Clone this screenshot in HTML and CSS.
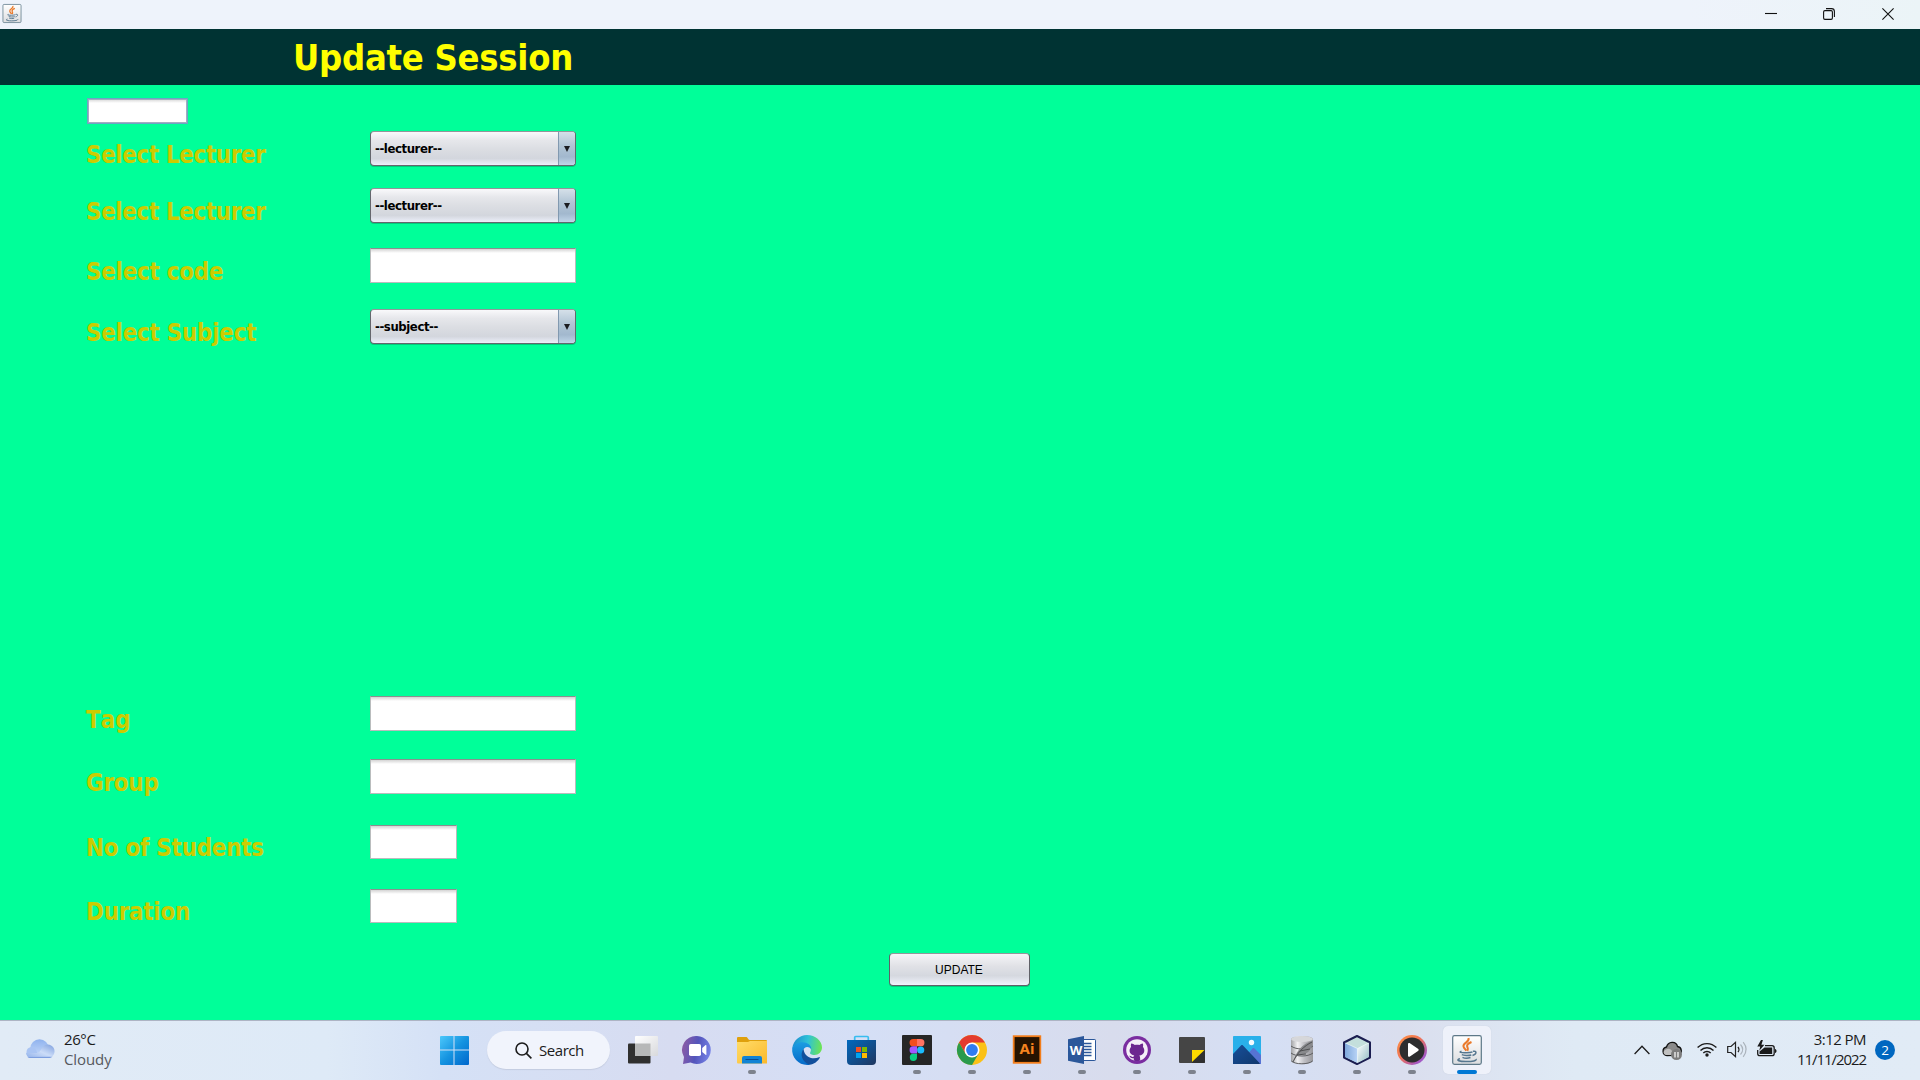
FILE: index.html
```html
<!DOCTYPE html>
<html lang="en">
<head>
<meta charset="utf-8">
<title>Update Session</title>
<link rel="stylesheet" href="styles.css">
</head>
<body>
<div class="titlebar">
  <svg class="java-small" viewBox="0 0 30 30"><use href="#java"/></svg>
  <div class="window-controls">
    <svg viewBox="0 0 12 12"><path d="M0 5.5h12"/></svg>
    <svg viewBox="0 0 12 12"><rect x=".6" y="2.6" width="8.8" height="8.8" rx="1.3"/><path d="M3 .6h5.5a2.9 2.9 0 0 1 2.9 2.9V9"/></svg>
    <svg viewBox="0 0 12 12"><path d="M.4.4l11.2 11.2M11.6.4L.4 11.6"/></svg>
  </div>
</div>
<header class="heading"><h1>Update Session</h1></header>
<main class="form">
  <div class="field small focus"></div>
  <div class="row r1"><label>Select Lecturer</label><div class="combo"><span>--lecturer--</span><i></i></div></div>
  <div class="row r2"><label>Select Lecturer</label><div class="combo"><span>--lecturer--</span><i></i></div></div>
  <div class="row r3"><label>Select code</label><div class="field"></div></div>
  <div class="row r4"><label>Select Subject</label><div class="combo"><span>--subject--</span><i></i></div></div>
  <div class="row r5"><label>Tag</label><div class="field"></div></div>
  <div class="row r6"><label>Group</label><div class="field"></div></div>
  <div class="row r7 short"><label>No of Students</label><div class="field"></div></div>
  <div class="row r8 short"><label>Duration</label><div class="field"></div></div>
  <button class="update">UPDATE</button>
</main>
<footer class="taskbar">
  <div class="weather">
    <svg viewBox="0 0 30 20">
      <defs><linearGradient id="cl1" x1="0" y1="0" x2="0" y2="1"><stop offset="0" stop-color="#8fb2ee"/><stop offset="1" stop-color="#c9dcfa"/></linearGradient>
      <linearGradient id="cl2" x1="1" y1="0" x2="0" y2="1"><stop offset="0" stop-color="#7fa0de"/><stop offset=".5" stop-color="#cbdcf8"/><stop offset="1" stop-color="#8fb0ea"/></linearGradient></defs>
      <circle cx="14.5" cy="9.5" r="9.3" fill="url(#cl1)"/>
      <path d="M6 8a6 6 0 0 1 5.5 4L14 19H6A5.6 5.6 0 0 1 6 8z" fill="#a9c4f3"/>
      <path d="M6 19h17a6.7 6.7 0 1 0-6-10c-1.500 2-2 4.500-5 5H1c.5 3 2.500 5 5 5z" fill="url(#cl2)"/>
      <path d="M2.500 18c1 .8 2 1 3.500 1h17c2 0 3.500-.5 4.500-1.300z" fill="#7d9fe0"/>
    </svg>
    <div class="lines"><span>26°C</span><span class="dim">Cloudy</span></div>
  </div>
  <div class="slot start"><svg viewBox="0 0 30 30">
    <defs><linearGradient id="win" x1="0" y1="0" x2="1" y2="1"><stop offset="0" stop-color="#4cc8fb"/><stop offset=".5" stop-color="#1593e0"/><stop offset="1" stop-color="#0067cc"/></linearGradient></defs>
    <path fill="url(#win)" d="M2 1h12.500v13.500H1V2a1 1 0 0 1 1-1zM15.500 1H29a1 1 0 0 1 1 1v12.500H15.500zM1 15.500h13.500V30H2a1 1 0 0 1-1-1zM15.500 15.500H30V29a1 1 0 0 1-1 1H15.500z"/></svg></div>
  <div class="search"><svg viewBox="0 0 17 17"><circle cx="7" cy="7" r="6"/><path d="M11.400 11.400l5 5"/></svg><span>Search</span></div>

  <div class="slot"><svg viewBox="0 0 30 30">
    <defs><linearGradient id="tv" x1="0" y1="0" x2="1" y2="1"><stop offset="0" stop-color="#fff"/><stop offset="1" stop-color="#d8d9dc"/></linearGradient></defs>
    <rect x="1" y="8.500" width="22.500" height="20" rx="1" fill="#30302f"/><rect x="8" y="1" width="23" height="20" rx="1" fill="url(#tv)"/><path d="M8 8.500h15.500V21H8z" fill="#b7b8b8"/></svg></div>
  <div class="slot"><svg viewBox="0 0 30 30">
    <defs><linearGradient id="chat" x1="0" y1=".4" x2="1" y2=".6"><stop offset="0" stop-color="#8a5ba6"/><stop offset=".5" stop-color="#5355bb"/><stop offset="1" stop-color="#7784e8"/></linearGradient></defs>
    <path d="M15 1a14 14 0 1 1-6.500 26.500L1 29l1-7A14 14 0 0 1 15 1z" fill="url(#chat)"/><rect x="7" y="9" width="12" height="12" rx="1.800" fill="#fff"/><path d="M20.200 13l3.400-3c.4-.3.800 0 .8.400v9c0 .5-.5.800-.8.400l-3.400-2.800z" fill="#fff"/></svg></div>
  <div class="slot run"><svg viewBox="0 0 30 30">
    <defs><linearGradient id="fold" x1="0" y1="0" x2="1" y2="1"><stop offset="0" stop-color="#ffdc69"/><stop offset="1" stop-color="#fbb92b"/></linearGradient></defs>
    <path d="M0 9V3a1 1 0 0 1 1-1h8.500c1 0 1.700 3 3 3H29a1 1 0 0 1 1 1v4z" fill="#dfa00c"/><path d="M0 7h11l2-1h17v22.500H1a1 1 0 0 1-1-1z" fill="url(#fold)"/><path d="M5 28.500V23a2 2 0 0 1 2-2h16a2 2 0 0 1 2 2v5.500z" fill="#1183d4"/><rect x="8.500" y="24" width="13" height="1" fill="#0a4d91"/></svg></div>
  <div class="slot"><svg viewBox="0 0 30 30">
    <defs><linearGradient id="ed1" x1="0" y1=".5" x2="1" y2=".6"><stop offset="0" stop-color="#1c8dd0"/><stop offset=".5" stop-color="#2fc2d7"/><stop offset="1" stop-color="#6ee550"/></linearGradient><linearGradient id="ed2" x1="0" y1="0" x2="0" y2="1"><stop offset="0" stop-color="#1b9de2"/><stop offset="1" stop-color="#0669c8"/></linearGradient></defs>
    <path d="M.3 13C1.500 5.500 7.500 0 15 0c8.500 0 15 6 15 12.500 0 4.500-3.500 7.500-7.500 7.500-3 0-5-1-4.300-2.500 1.700-3 .3-6.500-4.200-8C8 8 3 9.500.3 13z" fill="url(#ed1)"/>
    <path d="M.2 13C2.500 9 6 7.300 10.500 7.300c5 0 9 3.200 8.800 7-3-4-8-2.300-8.500 2.500C10.300 22 13 27 18 29.700 8 31.500-.8 23.500.2 13z" fill="url(#ed2)"/>
    <path d="M11.500 14C7.500 19 10 27 17.500 29.800c4.500-.5 8.500-3.500 10.300-7 .3-.6-.2-.9-.8-.6-6 2.800-14.500.5-15.500-8.200z" fill="#124f9c"/></svg></div>
  <div class="slot"><svg viewBox="0 0 30 30">
    <defs><linearGradient id="st" x1="0" y1="0" x2="1" y2="1"><stop offset="0" stop-color="#0069bf"/><stop offset="1" stop-color="#20365f"/></linearGradient></defs>
    <path d="M7.700 6V2.500a1 1 0 0 1 1-1h11.600a1 1 0 0 1 1 1V6" fill="none" stroke="#38bdf0" stroke-width="1.700"/><path d="M0 5h29v21a4 4 0 0 1-4 4H4a4 4 0 0 1-4-4z" fill="url(#st)"/><path d="M9 12h5v5H9z" fill="#f25022"/><path d="M15 12h5v5h-5z" fill="#7fba00"/><path d="M9 18h5v5H9z" fill="#00a4ef"/><path d="M15 18h5v5h-5z" fill="#ffb900"/></svg></div>
  <div class="slot run"><svg viewBox="0 0 30 30"><rect width="30" height="30" rx="1" fill="#262626"/><path d="M15 4h-3.800a3.600 3.600 0 0 0 0 7.300H15z" fill="#f24e1e"/><path d="M15 4h3.800a3.600 3.600 0 0 1 0 7.300H15z" fill="#ff7262"/><path d="M15 11.300h-3.800a3.600 3.600 0 0 0 0 7.300H15z" fill="#a259ff"/><circle cx="18.700" cy="15" r="3.600" fill="#1abcfe"/><path d="M15 18.700h-3.800a3.600 3.600 0 1 0 3.800 3.700z" fill="#0acf83"/></svg></div>
  <div class="slot run"><svg viewBox="0 0 30 30"><circle cx="15" cy="15" r="15" fill="#fbc116"/><path d="M2 7.500A15 15 0 0 1 28 7.500H15L8.500 18.750z" fill="#e33b2e"/><path d="M2 7.500a15 15 0 0 0 13 22.500l6.500-11.200H8.500z" fill="#2a9a4c"/><circle cx="15" cy="15" r="7.500" fill="#fff"/><circle cx="15" cy="15" r="5.900" fill="#2f7cf0"/></svg></div>
  <div class="slot run"><svg viewBox="0 0 30 30"><rect x="1.700" y="1.200" width="26.600" height="26.600" fill="#261300" stroke="#f27d1a" stroke-width="1.800"/><text class="ai-text" x="15" y="18.500" text-anchor="middle">Ai</text></svg></div>
  <div class="slot run"><svg viewBox="0 0 30 30"><rect x="14" y="4.500" width="14.500" height="21" rx=".7" fill="#fff" stroke="#2b579a"/><path d="M16 8.500h8.500M16 11.500h8.500M16 14.500h8.500M16 17.500h8.500M16 20.500h8.500" stroke="#2b579a" stroke-width="1.300"/><path d="M1 4.200L17 1v28L1 25.800z" fill="#2b579a"/><text class="word-text" x="9" y="19.500" text-anchor="middle">W</text></svg></div>
  <div class="slot run"><svg viewBox="0 0 30 30"><circle cx="15" cy="15" r="14" fill="#7a2da0"/><circle cx="15" cy="15" r="10.800" fill="#f5eff8"/><path d="M9.300 8.600c1-.2 2.600.7 3.500 1.300 1.500-.3 3.200-.3 4.600 0 1-.6 2.500-1.500 3.400-1.300.5 1.200.4 2.300.1 3.100 3 3.900 1 8.300-3.600 8.800.8.900.9 2 .9 5-2 .7-4.300.7-6.400 0v-2.300c-3 .6-3.400-1-4.600-2.400 1.900-.3 2.300 1.700 4.400 1 .1-.7.400-1.100.7-1.400-4.700-.5-6.200-5-3.200-8.600-.3-.9-.3-2.200.200-3.200z" fill="#6c278f"/></svg></div>
  <div class="slot run"><svg viewBox="0 0 30 30"><path d="M3 2h24a1 1 0 0 1 1 1v24a1 1 0 0 1-1 1H3a1 1 0 0 1-1-1V3a1 1 0 0 1 1-1z" fill="#454545"/><path d="M15 28V15h13v12a1 1 0 0 1-1 1z" fill="#303030"/><path d="M15 15h12.500L15 27z" fill="#fddb00"/></svg></div>
  <div class="slot run"><svg viewBox="0 0 30 30">
    <defs><linearGradient id="ph" x1="0" y1="0" x2="1" y2="1"><stop offset="0" stop-color="#174f99"/><stop offset="1" stop-color="#10386d"/></linearGradient></defs>
    <rect x="1" y="1" width="28" height="28" rx=".8" fill="#29b0ea"/><path d="M13 22l7.500-8.500c.6-.6 1.400-.6 2 0L29 20v9H17z" fill="#5673d4"/><path d="M1 19l8-8.500c.6-.6 1.400-.6 2 0L28 28.500l-1 .5H1z" fill="url(#ph)"/><circle cx="19.500" cy="7.500" r="2.700" fill="#f3faff"/></svg></div>
  <div class="slot run"><svg viewBox="0 0 30 30">
    <defs><linearGradient id="db"><stop offset="0" stop-color="#a1a2a5"/><stop offset=".3" stop-color="#f1f1f3"/><stop offset=".6" stop-color="#bfbfc4"/><stop offset="1" stop-color="#97979b"/></linearGradient></defs>
    <path d="M4 4c1-4 21-4 22 0v21.500c-2 5-20 5-22 0z" fill="url(#db)"/><ellipse cx="15" cy="4" rx="11" ry="3" fill="#d6d7da"/><path d="M4 11c5 4 17 4 22 0M4 18c5 4 17 4 22 0M4.300 26c4 3.700 17 3.700 21.400 0" fill="none" stroke="#5b5c5f" stroke-width="1"/><path d="M6 27C9 17 15 8 26 6c-1 6-3 11-8 13-3 1-6 1-8 2z" fill="#88898c"/><path d="M6 27C10 18 17 11 25 7M13 16l10-2M10 20l9-1" fill="none" stroke="#48494c" stroke-width=".9"/></svg></div>
  <div class="slot run"><svg viewBox="0 0 30 30">
    <defs><linearGradient id="nb1"><stop offset="0" stop-color="#7fa8dc"/><stop offset="1" stop-color="#b9d4f6"/></linearGradient><linearGradient id="nb2" x1="0" y1="0" x2="1" y2="1"><stop offset="0" stop-color="#fff"/><stop offset="1" stop-color="#93bcc4"/></linearGradient></defs>
    <path d="M15 1l13 6.500v15L15 29 2 22.500v-15z" fill="#c4dfdc" stroke="#1b1d50" stroke-width="2" stroke-linejoin="round"/><path d="M3 8l12.500 5.500V28L3 22z" fill="url(#nb1)"/><path d="M15.500 13.500L27 8v14l-11.500 6z" fill="url(#nb2)"/><path d="M3.500 8l12 5.500L26.500 8M15.500 13.500v14" stroke="#f5fcfd" fill="none" stroke-width=".6"/></svg></div>
  <div class="slot run"><svg viewBox="0 0 30 30">
    <defs><linearGradient id="mp" x1="0" y1="0" x2="1" y2="1"><stop offset="0" stop-color="#ff9440"/><stop offset=".45" stop-color="#ef7257"/><stop offset=".8" stop-color="#a658c0"/><stop offset="1" stop-color="#9a66df"/></linearGradient></defs>
    <circle cx="15" cy="15" r="15" fill="url(#mp)"/><circle cx="15" cy="15" r="12.500" fill="#2d2d2e"/><path d="M11 9.300c0-1.200 1-1.600 1.900-1L21 13.800c.9.600.9 1.600 0 2.200l-8.100 5.500c-.9.600-1.900.2-1.900-1z" fill="#fff"/></svg></div>
  <div class="slot active"><svg viewBox="0 0 30 30">
    <defs><linearGradient id="jb" x1="0" y1="0" x2="0" y2="1"><stop offset="0" stop-color="#fff"/><stop offset="1" stop-color="#dcdddf"/></linearGradient></defs>
    <g id="java"><rect x=".7" y=".7" width="28.600" height="28.600" rx="1.800" fill="url(#jb)" stroke="#5d7888" stroke-width="1.200"/>
    <path d="M16.500 3c1.500 4-6 5-5 8.500.4 1.800 2 2.800 2.800 4.300M19.500 7c-3 1.300-5 2.600-4.300 4.600.5 1.400 1.500 2.400.2 4.200" fill="none" stroke="#ea7a2b" stroke-width="2"/>
    <path d="M9.500 16.300c-3 .8-1.200 1.600 5 1.400 2.500 0 5-.4 6-.9M9.800 19.700c2 1 7 1 9.500.3M10.500 22.300c2 1 6 .9 8 .2M21 16.300c4-1 4 3-.5 4.200M8 23.800c-5 1.300-.5 2.900 6.500 2.800 6 0 10.500-1 9.500-2.600" fill="none" stroke="#56778f" stroke-width="1.500"/></g></svg></div>

  <div class="tray">
    <svg class="chevron" viewBox="0 0 16 10"><path d="M.6 9L8 1.300 15.400 9"/></svg>
    <svg class="cloud" viewBox="0 0 20 20"><path d="M5 14.500A4.300 4.300 0 0 1 4.500 6C6 .5 14-.5 15.500 5.500 20 6 20.500 12 17 14z" fill="#8b8b8b" stroke="#111" stroke-width="1.300"/><path d="M2 10c3-3 6-3 8 0l3 4H4c-2-.5-3-2-2-4z" fill="#c0c0c0"/><circle cx="14.500" cy="13.500" r="5.500" fill="#7c7c7c"/><path d="M13 11v5.500M16 11v5.500" stroke="#fff" stroke-width="1.200"/></svg>
    <svg class="wifi" viewBox="0 0 20 15"><path d="M.6 5.600a13 13 0 0 1 18.800 0M3.500 8.500a9 9 0 0 1 13 0M6.300 11a5.200 5.200 0 0 1 7.400 0"/><circle cx="10" cy="13" r="1.700"/></svg>
    <svg class="volume" viewBox="0 0 20 17"><path d="M.7 5.500H4L8.500 1.300v14.400L4 11.500H.7z" stroke="#222"/><path d="M11 5.800c1.300 1.800 1.300 3.600 0 5.400" stroke="#222"/><path d="M13.500 3.500c3 3.400 3 6.600 0 10M16.200 1.200c4 5 4 9.600 0 14.600" stroke="#abb3bc"/></svg>
    <svg class="battery" viewBox="0 0 20 16"><path d="M8 4.700h7a2.200 2.200 0 0 1 2.200 2.200v5.600a2.200 2.200 0 0 1-2.200 2.200H2.900A2.200 2.200 0 0 1 .7 12.500V9" fill="none" stroke="#1a1a1a" stroke-width="1.300"/><path d="M7.500 6.500h7.700V13H2.500v-2.500z" fill="#1a1a1a"/><path d="M18 8v4c2-.5 2-3.500 0-4z" fill="#1a1a1a"/><path d="M4-1L.3 5.400h2.900L2.300 9.700 7.400 3.700H4.400L5.900-1z" fill="#1a1a1a"/></svg>
    <div class="lines clock"><span class="time">3:12 PM</span><span class="date">11/11/2022</span></div>
    <span class="badge">2</span>
  </div>
</footer>
</body>
</html>
```
FILE: styles.css
```css
* { box-sizing: border-box; }
body {
  margin: 0;
  width: 1920px;
  height: 1080px;
  overflow: hidden;
  display: flex;
  flex-direction: column;
  background: #00ff99;
  font-family: "DejaVu Sans Condensed", "DejaVu Sans", sans-serif;
}
svg { display: block; overflow: visible; flex: none; }

.titlebar {
  height: 29px;
  flex: none;
  display: flex;
  justify-content: space-between;
  padding: 4px 26px 0 2px;
  background: linear-gradient(90deg, #eef3fb 88%, #ebf4f7);
}
.java-small { width: 20px; height: 19px; }
.window-controls { display: flex; gap: 46px; padding-top: 4px; }
.window-controls svg { width: 12px; height: 12px; fill: none; stroke: #111; stroke-width: 1.1; }
.window-controls svg:nth-child(2) { margin-right: 1px; }

.heading { height: 56px; flex: none; background: #003333; padding: 8px 0 0 293px; }
.heading h1 { margin: 0; font-size: 36px; line-height: 42px; letter-spacing: -0.25px; color: #ffff00; }

.form { height: 935px; flex: none; padding: 13px 0 0 87px; }
.row { display: flex; height: 35px; }
.row label {
  width: 284px;
  margin-left: -1px;
  padding-top: 10px;
  font-weight: bold;
  font-size: 24px;
  line-height: 28px;
  letter-spacing: -0.3px;
  font-kerning: none;
  color: #cccc00;
  white-space: nowrap;
}
.r1 { margin-top: 7px; }
.r2 { margin-top: 22px; }
.r1 label, .r2 label { letter-spacing: -0.42px; }
.r3 { margin-top: 25px; }
.r4 { margin-top: 26px; }
.r5 { margin-top: 352px; }
.r5 label { letter-spacing: 0; }
.r6 { margin-top: 28px; }
.r7 { margin-top: 31px; }
.r8 { margin-top: 30px; }
.short { height: 34px; }
.short label { padding-top: 9px; }

.field {
  width: 206px;
  background: linear-gradient(#d4d4d4, #fff 4px);
  border: 1px solid #b9bcbd;
  border-top-color: #8c8f90;
}
.short .field { width: 87px; }
.field.small { width: 101px; height: 26px; border: 1px solid #6fa3c4; box-shadow: inset 0 0 0 1px #a3adc0; }

.combo {
  width: 206px;
  display: flex;
  border: 1px solid #65666d;
  border-top-color: #93959b;
  border-radius: 4px;
  overflow: hidden;
  background: linear-gradient(#f9f9fb, #e6e7eb 25%, #dcdee3 50%, #d3d6dd 80%, #eceffa);
  box-shadow: 0 1px 0 rgba(0, 90, 60, .3);
}
.combo span {
  flex: 1;
  padding: 1px 0 0 4px;
  font-weight: bold;
  font-size: 13px;
  line-height: 32px;
  letter-spacing: -0.42px;
  color: #000;
}
.combo i {
  width: 17px;
  display: flex;
  justify-content: center;
  align-items: center;
  border-left: 1px solid #8199b0;
  background: linear-gradient(#d5e0e9, #b2c5d5 40%, #a2b8ce 75%, #c0d5e8);
}
.combo i::before { content: ""; border: 3.5px solid transparent; border-top: 6px solid #1b1c20; border-bottom: 0; }

.update {
  display: block;
  width: 141px;
  height: 33px;
  margin: 30px 0 0 802px;
  padding: 0 1px 0 0;
  border: 1px solid #5f6168;
  border-top-color: #93959b;
  border-radius: 4px;
  background: linear-gradient(#f5f5f8, #e0e1e6 40%, #d5d8df 70%, #f0f3fc);
  box-shadow: 0 1px 0 rgba(0, 90, 60, .3);
  font: 12px "Liberation Sans", Arial, sans-serif;
  color: #000;
}

.taskbar {
  height: 60px;
  flex: none;
  display: flex;
  border-top: 1px solid #adb4c4;
  background: linear-gradient(90deg, #e1ebf6 0, #deeaf7 17%, #d5e1f6 23%, #d7dcf1 35%, #d5dff6 45%, #d8dced 58%, #d5dff4 66%, #dadeee 73%, #dfeaf5 82%, #e1ebf6 100%);
  font-family: "Open Sans", "Noto Sans", sans-serif;
  font-size: 15px;
  color: #1b1b1b;
}
.weather { width: 426px; flex: none; display: flex; gap: 9px; padding-left: 25px; }
.weather svg { width: 30px; height: 20px; margin-top: 18px; }
.lines { display: flex; flex-direction: column; padding-top: 8px; line-height: 20px; white-space: nowrap; letter-spacing: -0.4px; }
.weather .dim { color: #56595e; letter-spacing: -0.1px; }
.slot {
  width: 55px;
  height: 48px;
  margin-top: 5px;
  flex: none;
  display: flex;
  flex-direction: column;
  align-items: center;
  padding-top: 9px;
}
.slot svg { width: 30px; height: 30px; }
.slot.start { width: 56px; }
.slot.run::after { content: ""; width: 8px; height: 4px; margin-top: 5px; border-radius: 2px; background: #7d828d; }
.slot.active { width: 48px; margin-left: 3.5px; border-radius: 5px; background: #eef1fa; box-shadow: 0 0 1px #bfc6d6; }
.slot.active::after { content: ""; width: 20px; height: 4px; margin-top: 5px; border-radius: 2px; background: #0078d4; }
.ai-text { font: bold 15px "Noto Sans", sans-serif; fill: #f5831f; }
.word-text { font: bold 13px "Open Sans", sans-serif; fill: #fff; }
.search {
  width: 123px;
  height: 38px;
  flex: none;
  margin: 10px 4.5px 0 5px;
  display: flex;
  gap: 7px;
  padding-left: 28px;
  border-radius: 19px;
  background: #f1f4fc;
  box-shadow: 0 1px 1px #c4cce0;
  line-height: 39px;
  letter-spacing: -0.45px;
}
.search svg { width: 17px; height: 17px; margin-top: 11px; fill: none; stroke: #1b1b1b; stroke-width: 1.6; }

.tray { flex: 1; display: flex; padding: 0 25px 0 143px; }
.chevron { width: 16px; height: 10px; margin: 24px 12px 0 0; fill: none; stroke: #1b1b1b; stroke-width: 1.300; }
.cloud { width: 20px; height: 20px; margin: 20px 15px 0 0; }
.wifi { width: 20px; height: 15px; margin: 21px 10px 0 0; fill: none; stroke: #1b1b1b; stroke-width: 1.400; }
.wifi circle { fill: #1b1b1b; stroke: none; }
.volume { width: 20px; height: 17px; margin: 20px 10px 0 0; fill: none; stroke-width: 1.200; }
.battery { width: 20px; height: 16px; margin-top: 20px; }
.clock { flex: 1; text-align: right; }
.time { letter-spacing: -0.55px; }
.date { letter-spacing: -1.05px; }
.badge {
  width: 20px;
  height: 20px;
  margin: 19px 0 0 9px;
  border-radius: 50%;
  background: #0067c0;
  color: #fff;
  font-size: 13.5px;
  line-height: 20px;
  text-align: center;
}
```
